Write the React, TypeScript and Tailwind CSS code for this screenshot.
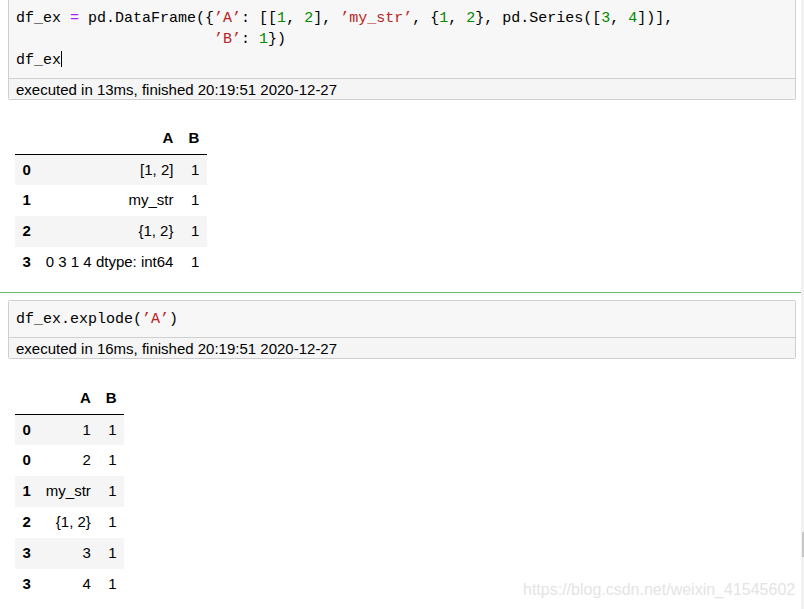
import React from "react";

const mono = { fontFamily: '"Liberation Mono", monospace' };

const S = ({ c }: { c: string }) => <span className="text-[#ba2121]">{c}</span>;
const N = ({ c }: { c: string }) => <span className="text-[#008800]">{c}</span>;
const O = ({ c }: { c: string }) => <span className="text-[#aa22ff]">{c}</span>;

function Cell({ lines, time, first }: { lines: React.ReactNode[]; time: string; first?: boolean }) {
  return (
    <div className={`ml-[8px] w-[788px] border border-[#cfcfcf] rounded-[2px] ${first ? "mt-[-1px]" : ""}`}>
      <div
        className="bg-[#f7f7f7] pt-[8px] pb-[7px] pl-[7px] text-[15px] leading-[21px] text-black whitespace-pre"
        style={mono}
      >
        {lines.map((l, i) => (
          <div key={i}>{l}</div>
        ))}
      </div>
      <div className="border-t border-[#cfcfcf] bg-[#f5f5f5] h-[21px] pl-[7px] text-[15px] leading-[21px] text-black font-['Liberation_Sans',sans-serif]">
        {time}
      </div>
    </div>
  );
}

function Table({ cols, rows }: { cols: string[]; rows: string[][] }) {
  return (
    <table className="self-start ml-[15px] border-collapse text-[15px] text-black font-['Liberation_Sans',sans-serif]">
      <thead>
        <tr className="border-b border-black">
          <th className="h-[31px] px-[7.5px]"></th>
          {cols.map((c) => (
            <th key={c} className="h-[31px] px-[7.5px] text-right font-bold">
              {c}
            </th>
          ))}
        </tr>
      </thead>
      <tbody>
        {rows.map((r, i) => (
          <tr key={i} className={i % 2 === 0 ? "bg-[#f5f5f5]" : "bg-white"}>
            <th className="h-[31px] px-[7.5px] text-left font-bold">{r[0]}</th>
            {r.slice(1).map((v, j) => (
              <td key={j} className="h-[31px] px-[7.5px] text-right whitespace-nowrap">
                {v}
              </td>
            ))}
          </tr>
        ))}
      </tbody>
    </table>
  );
}

export default function App() {
  const line1 = (
    <>
      df_ex <O c="=" /> pd.DataFrame({"{"}
      <S c="’A’" />: [[<N c="1" />, <N c="2" />], <S c="’my_str’" />, {"{"}
      <N c="1" />, <N c="2" />
      {"}"}, pd.Series([<N c="3" />, <N c="4" />])],
    </>
  );
  const line2 = (
    <>
      {"                      "}
      <S c="’B’" />: <N c="1" />
      {"})"}
    </>
  );
  const line3 = (
    <>
      df_ex<span className="inline-block w-px h-[16px] bg-black align-[-3px]"></span>
    </>
  );
  const line4 = (
    <>
      df_ex.explode(<S c="’A’" />)
    </>
  );

  return (
    <div className="relative w-[804px] h-[609px] overflow-hidden bg-white flex">
      <div className="w-[801px] flex flex-col">
        <Cell first lines={[line1, line2, line3]} time="executed in 13ms, finished 20:19:51 2020-12-27" />
        <div className="h-[23px]" />
        <Table
          cols={["A", "B"]}
          rows={[
            ["0", "[1, 2]", "1"],
            ["1", "my_str", "1"],
            ["2", "{1, 2}", "1"],
            ["3", "0 3 1 4 dtype: int64", "1"],
          ]}
        />
        <div className="h-[14px]" />
        <div className="h-px bg-[#66bb6a]" />
        <div className="h-[7px]" />
        <Cell lines={[line4]} time="executed in 16ms, finished 20:19:51 2020-12-27" />
        <div className="h-[24px]" />
        <Table
          cols={["A", "B"]}
          rows={[
            ["0", "1", "1"],
            ["0", "2", "1"],
            ["1", "my_str", "1"],
            ["2", "{1, 2}", "1"],
            ["3", "3", "1"],
            ["3", "4", "1"],
          ]}
        />
      </div>
      <div className="w-[3px] bg-[#f1f1f1] flex flex-col">
        <div className="h-[532px]" />
        <div className="h-[25px] ml-[1px] bg-[#c8c8c8]" />
      </div>
      <div className="absolute left-[523px] top-[580px] text-[16px] leading-[20px] text-[#e4e4e4] font-['Liberation_Sans',sans-serif]">
        https://blog.csdn.net/weixin_41545602
      </div>
    </div>
  );
}
